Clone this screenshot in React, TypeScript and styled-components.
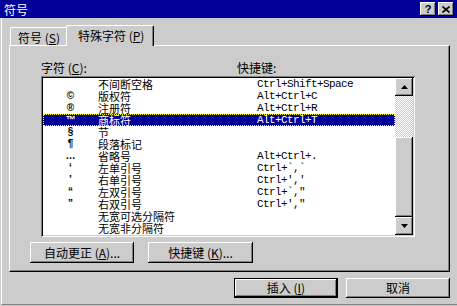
import React from "react";
import styled, { createGlobalStyle } from "styled-components";

type SpecialChar = {
  symbol: string;
  name: string;
  shortcut: string;
};

const chars: SpecialChar[] = [
  { symbol: "", name: "不间断空格", shortcut: "Ctrl+Shift+Space" },
  { symbol: "©", name: "版权符", shortcut: "Alt+Ctrl+C" },
  { symbol: "®", name: "注册符", shortcut: "Alt+Ctrl+R" },
  { symbol: "™", name: "商标符", shortcut: "Alt+Ctrl+T" },
  { symbol: "§", name: "节", shortcut: "" },
  { symbol: "¶", name: "段落标记", shortcut: "" },
  { symbol: "…", name: "省略号", shortcut: "Alt+Ctrl+." },
  { symbol: "‘", name: "左单引号", shortcut: "Ctrl+`,`" },
  { symbol: "’", name: "右单引号", shortcut: "Ctrl+','" },
  { symbol: "“", name: "左双引号", shortcut: "Ctrl+`,\"" },
  { symbol: "”", name: "右双引号", shortcut: "Ctrl+',\"" },
  { symbol: "", name: "无宽可选分隔符", shortcut: "" },
  { symbol: "", name: "无宽非分隔符", shortcut: "" },
];

const SELECTED = 3;

const GlobalStyle = createGlobalStyle`
  html, body {
    margin: 0;
    padding: 0;
    background: #cccccc;
  }
  body {
    font-family: "Noto Sans CJK SC", "Noto Sans", sans-serif;
    font-size: 12px;
  }
`;

const bevel = `
  box-shadow: inset -1px -1px #000, inset 1px 1px #fff, inset -2px -2px #808080;
`;

const Window = styled.div`
  width: 457px;
  height: 306px;
  background: #cccccc;
  display: flex;
  flex-direction: column;
  overflow: hidden;
  color: #000;
`;

const TitleBar = styled.div`
  height: 18px;
  flex-shrink: 0;
  background: #000099;
  color: #fff;
  display: flex;
  align-items: center;
  padding: 0 3px 0 4px;
  font-size: 12px;
  line-height: 12px;
`;

const TitleText = styled.div`
  flex: 1;
  padding-top: 1px;
`;

const CaptionButton = styled.div`
  width: 16px;
  height: 14px;
  margin-left: 2px;
  background: #cccccc;
  ${bevel}
  display: flex;
  align-items: center;
  justify-content: center;
  color: #000;
  font-family: "Liberation Sans", sans-serif;
  font-weight: bold;
  font-size: 11px;
`;

const Body = styled.div`
  flex: 1;
  display: flex;
  flex-direction: column;
  margin-left: 1px;
  border-left: 1px solid #fff;
  border-bottom: 1px solid #808080;
  margin-bottom: 1px;
  padding: 7px 7px 0 7px;
`;

const TabRow = styled.div`
  height: 20px;
  display: flex;
  align-items: flex-end;
  padding-left: 1px;
  position: relative;
  z-index: 1;
`;

const Tab = styled.div<{ active?: boolean }>`
  box-sizing: border-box;
  height: ${({ active }) => (active ? "21px" : "18px")};
  width: ${({ active }) => (active ? "88px" : "58px")};
  margin-left: ${({ active }) => (active ? "-2px" : "0")};
  margin-bottom: ${({ active }) => (active ? "-1px" : "0")};
  background: #cccccc;
  border-top: 1px solid #fff;
  border-left: 1px solid #fff;
  border-right: 1px solid #000;
  border-top-left-radius: 2px;
  border-top-right-radius: 2px;
  box-shadow: inset -1px 0 #808080;
  padding: ${({ active }) => (active ? "4px 0 0 11px" : "4px 0 0 7px")};
  font-size: 12px;
  line-height: 12px;
  white-space: nowrap;
`;

const Panel = styled.div`
  box-sizing: border-box;
  height: 227px;
  border-top: 1px solid #fff;
  border-left: 1px solid #fff;
  border-right: 1px solid #000;
  border-bottom: 1px solid #000;
  box-shadow: inset -1px -1px #808080;
  padding: 16px 0 0 20px;
  display: flex;
  flex-direction: column;
`;

const ListArea = styled.div`
  margin-left: 11px;
  display: flex;
  flex-direction: column;
`;

const LabelRow = styled.div`
  height: 14px;
  display: flex;
  font-size: 12px;
  line-height: 12px;
`;

const Label = styled.div<{ width?: number }>`
  width: ${({ width }) => (width ? `${width}px` : "auto")};
`;

const ListBox = styled.div`
  box-sizing: border-box;
  width: 374px;
  height: 161px;
  padding: 2px;
  background: #fff;
  box-shadow: inset 1px 1px #808080, inset -1px -1px #fff, inset 2px 2px #000,
    inset -2px -2px #cccccc;
  display: flex;
`;

const Rows = styled.div`
  flex: 1;
  display: flex;
  flex-direction: column;
`;

const Row = styled.div<{ selected?: boolean }>`
  height: 12px;
  display: flex;
  align-items: center;
  font-size: 11px;
  line-height: 12px;
  white-space: nowrap;
  background: ${({ selected }) => (selected ? "#000099" : "transparent")};
  color: ${({ selected }) => (selected ? "#fff" : "#000")};
  outline: ${({ selected }) => (selected ? "1px dotted #ffff00" : "none")};
  outline-offset: -1px;
`;

const SymbolCell = styled.span`
  width: 55px;
  text-align: center;
  font-family: "Liberation Sans", sans-serif;
  font-size: 10px;
  font-weight: bold;
`;

const NameCell = styled.span`
  width: 159px;
  font-size: 11px;
`;

const ShortcutCell = styled.span`
  font-family: "Liberation Mono", monospace;
  font-size: 11px;
  letter-spacing: -0.6px;
`;

const ScrollBar = styled.div`
  width: 18px;
  display: flex;
  flex-direction: column;
`;

const ScrollButton = styled.div`
  height: 18px;
  background: #cccccc;
  ${bevel}
  display: flex;
  align-items: center;
  justify-content: center;
`;

const Track = styled.div`
  height: 41px;
  background: repeating-conic-gradient(#fff 0 25%, #cccccc 0 50%) 0 0 / 2px 2px;
`;

const Thumb = styled.div`
  height: 80px;
  background: #cccccc;
  ${bevel}
`;

const ButtonRow = styled.div<{ gap: number }>`
  display: flex;
  gap: ${({ gap }) => gap}px;
`;

const PanelButtons = styled(ButtonRow)`
  margin-top: 5px;
`;

const DialogButtons = styled(ButtonRow)`
  margin-top: 6px;
  justify-content: flex-end;
`;

const Button = styled.div<{ width: number; height: number; isDefault?: boolean }>`
  box-sizing: border-box;
  width: ${({ width }) => width}px;
  height: ${({ height }) => height}px;
  background: #cccccc;
  border: ${({ isDefault }) => (isDefault ? "1px solid #000" : "none")};
  ${bevel}
  display: flex;
  align-items: center;
  justify-content: center;
  font-size: 12px;
  line-height: 12px;
  white-space: nowrap;
`;

const Arrow = ({ down }: { down?: boolean }) => (
  <svg width="7" height="4" viewBox="0 0 7 4">
    <polygon points={down ? "0,0 7,0 3.5,4" : "3.5,0 7,4 0,4"} fill="#000" />
  </svg>
);

const CloseGlyph = () => (
  <svg width="8" height="7" viewBox="0 0 8 7">
    <path d="M0.5 0.5 L7.5 6.5 M7.5 0.5 L0.5 6.5" stroke="#000" strokeWidth="1.6" />
  </svg>
);

const App = () => {
  return (
    <>
      <GlobalStyle />
      <Window>
        <TitleBar>
          <TitleText>符号</TitleText>
          <CaptionButton>?</CaptionButton>
          <CaptionButton>
            <CloseGlyph />
          </CaptionButton>
        </TitleBar>
        <Body>
          <TabRow>
            <Tab>
              符号 (<u>S</u>)
            </Tab>
            <Tab active>
              特殊字符 (<u>P</u>)
            </Tab>
          </TabRow>
          <Panel>
            <ListArea>
              <LabelRow>
                <Label width={196}>
                  字符 (<u>C</u>):
                </Label>
                <Label>快捷键:</Label>
              </LabelRow>
              <ListBox>
                <Rows>
                  {chars.map((c, i) => (
                    <Row key={c.name} selected={i === SELECTED}>
                      <SymbolCell>{c.symbol}</SymbolCell>
                      <NameCell>{c.name}</NameCell>
                      <ShortcutCell>{c.shortcut}</ShortcutCell>
                    </Row>
                  ))}
                </Rows>
                <ScrollBar>
                  <ScrollButton>
                    <Arrow />
                  </ScrollButton>
                  <Track />
                  <Thumb />
                  <ScrollButton>
                    <Arrow down />
                  </ScrollButton>
                </ScrollBar>
              </ListBox>
            </ListArea>
            <PanelButtons gap={14}>
              <Button width={104} height={21}>
                自动更正 (<u>A</u>)...
              </Button>
              <Button width={105} height={21}>
                快捷键 (<u>K</u>)...
              </Button>
            </PanelButtons>
          </Panel>
          <DialogButtons gap={8}>
            <Button width={104} height={20} isDefault>
              插入 (<u>I</u>)
            </Button>
            <Button width={104} height={20}>
              取消
            </Button>
          </DialogButtons>
        </Body>
      </Window>
    </>
  );
};

export default App;
